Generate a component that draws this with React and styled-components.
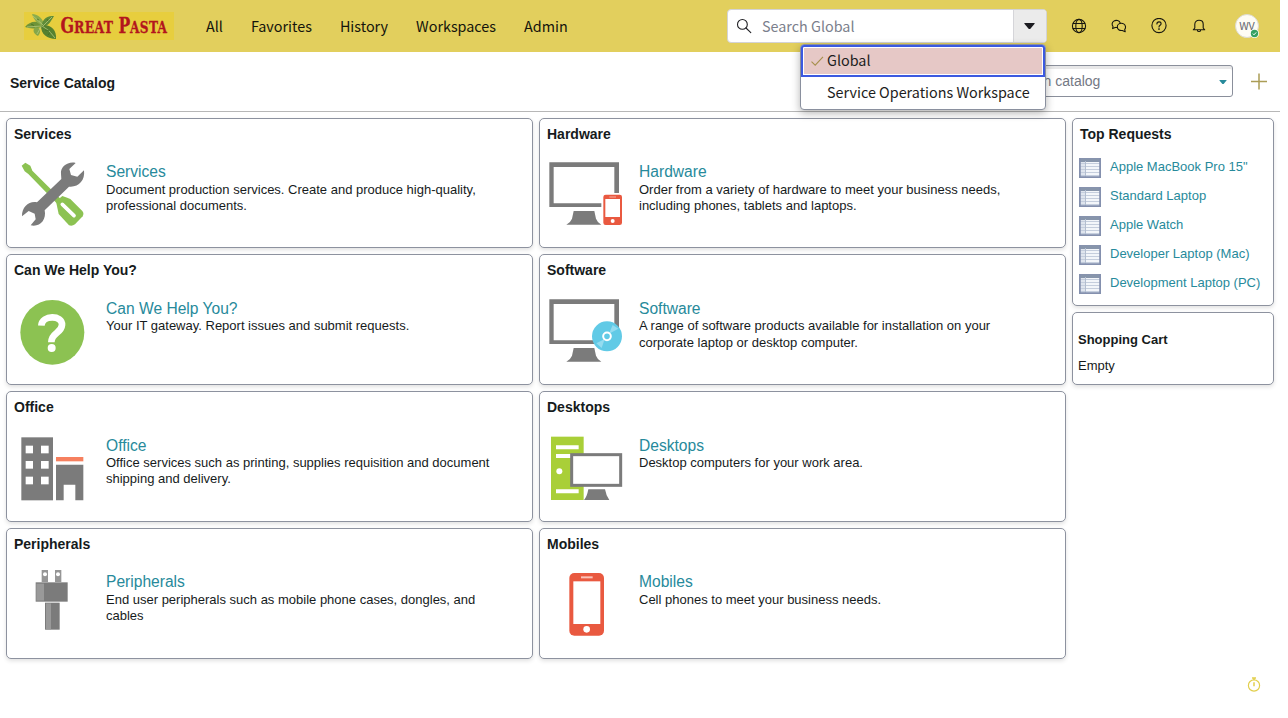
import React from "react";
import styled, { createGlobalStyle } from "styled-components";

const GlobalStyle = createGlobalStyle`
  *, *::before, *::after { box-sizing: border-box; }
  body { margin: 0; background: #fff; color: #161b1c; font-family: "Liberation Sans", Arial, sans-serif; }
  h1, h2, p, ul { margin: 0; padding: 0; }
  svg { display: block; flex: none; }
`;

const uiFont = `"Noto Sans CJK SC", "Noto Sans", sans-serif`;

const Page = styled.div`
  width: 1280px;
  height: 718px;
  display: flex;
  flex-direction: column;
`;

const Header = styled.header`
  height: 52px;
  flex: none;
  display: flex;
  align-items: center;
  padding-left: 24px;
  background: #e2cf5d;
  font-family: ${uiFont};
`;

const Nav = styled.nav`
  display: flex;
  gap: 28px;
  margin-left: 32px;
  width: 521px;
`;

const NavLink = styled.a`
  font-size: 14.36px;
  line-height: 24px;
  color: #14140c;
`;

const SearchWrap = styled.div`
  position: relative;
  width: 320px;
  height: 34px;
`;

const SearchBox = styled.div`
  display: flex;
  height: 34px;
  border: 1px solid #d3d3d6;
  border-radius: 4px;
  background: #fff;
  overflow: hidden;
  align-items: center;
  padding-left: 8px;
`;

const SearchText = styled.span`
  flex: 1;
  margin-left: 10px;
  font-size: 14.36px;
  line-height: 24px;
  color: #7b808c;
`;

const ScopeButton = styled.span`
  width: 33px;
  height: 32px;
  display: flex;
  align-items: center;
  justify-content: center;
  padding-right: 1px;
  background: #ebebeb;
  border-left: 1px solid #d5d5d9;
`;

const ScopeMenu = styled.ul`
  position: absolute;
  z-index: 2;
  top: 35px;
  left: 73px;
  width: 246px;
  height: 66px;
  border: 1px solid #8a909e;
  border-radius: 4px;
  background: #fff;
  list-style: none;
  box-shadow: 0 3px 8px rgba(0, 0, 0, 0.3);
`;

const ScopeItem = styled.li`
  display: flex;
  align-items: center;
  height: 32px;
  padding: 0 0 4px ${(p) => (p.$selected ? "7px" : "26px")};
  font-size: 14.36px;
  color: #1d1d20;
  ${(p) =>
    p.$selected &&
    `
    border: 2px solid #3c59e0;
    border-radius: 3px 3px 0 0;
    background: #e6c8c6;
    box-shadow: inset 0 0 0 1px #fff;
    gap: 2px;

    svg { margin-top: 4px; }
  `}
`;

const Tools = styled.div`
  display: flex;
  margin-left: 12px;
`;

const Tool = styled.span`
  width: 40px;
  height: 24px;
  display: flex;
  align-items: center;
  justify-content: center;
`;

const Avatar = styled.span`
  position: relative;
  width: 24px;
  height: 24px;
  margin-left: 16px;
  border: 1px solid #dcdad0;
  border-radius: 50%;
  background: #fefcf4;
  display: flex;
  align-items: center;
  justify-content: center;
  font-size: 10.8px;
  line-height: 20px;
  padding-bottom: 2px;
  color: #666971;
`;

const Presence = styled.span`
  position: absolute;
  right: -1px;
  bottom: -1px;
`;

const TitleBar = styled.div`
  height: 60px;
  flex: none;
  display: flex;
  align-items: center;
  padding: 0 12px 0 10px;
  border-bottom: 1px solid #b7b7b7;
`;

const PageTitle = styled.h1`
  flex: 1;
  padding-top: 3px;
  font-size: 14px;
  line-height: 18px;
`;

const CatalogSearch = styled.div`
  width: 234px;
  height: 32px;
  display: flex;
  align-items: center;
  justify-content: space-between;
  padding: 0 5px 0 7px;
  border: 1px solid #8a8f9b;
  border-radius: 3px;
  box-shadow: inset 0 3px 0 #e8e8e9;
  font-size: 14px;
  color: #747884;
  margin: 0 18px 1px 0;

  svg { margin-top: 2px; }
`;

const Columns = styled.main`
  display: flex;
  gap: 6px;
  padding: 5.6px 6px 0;
`;

const CategoryGrid = styled.div`
  display: grid;
  grid-template-columns: 527px 527px;
  grid-auto-rows: 130.8px;
  gap: 6px;
`;

const Card = styled.section`
  border: 1px solid #8d929f;
  border-radius: 5px;
  background: #fff;
  box-shadow: 0 2px 4px rgba(0, 0, 0, 0.12);
  height: ${(p) => p.$height || "auto"};
`;

const CardTitle = styled.h2`
  padding: 7px 7px 0;
  font-size: 14px;
  line-height: 17px;
`;

const CategoryBody = styled.div`
  display: flex;
  gap: 10px;
  padding: 13px 9px 0;
`;

const CategoryText = styled.div`
  width: 400px;
  padding-top: 7.4px;
`;

const CategoryLink = styled.a`
  display: block;
  font-size: 15.6px;
  line-height: 18px;
  color: #278a9b;
`;

const Description = styled.p`
  padding-top: 0.6px;
  font-size: 13px;
  line-height: 16.3px;
`;

const SideColumn = styled.aside`
  width: 202px;
  display: flex;
  flex-direction: column;
  gap: 6px;
`;

const RequestList = styled.div`
  padding: 11px 6px 0;
`;

const RequestRow = styled.a`
  display: flex;
  align-items: center;
  gap: 9px;
  height: 29px;
  font-size: 13px;
  color: #278a9b;
  white-space: nowrap;

  span { padding-bottom: 3px; }
`;

const CartBody = styled.div`
  padding: 19px 5px 0;
  font-size: 13px;
  line-height: 16px;

  h2 { font-size: 13px; line-height: 16px; margin-bottom: 10px; }
`;

const Footer = styled.footer`
  display: flex;
  justify-content: flex-end;
  padding: 18px 19px 0 0;
`;

const Logo = () => (
  <svg width="150" height="28" viewBox="0 0 150 28">
    <rect width="150" height="28" fill="#e7ce3e" />
    <path d="M1 15C5 10 12 8 18 12L20 14C14 17 6 17 1 15Z" fill="#6f9438" />
    <path d="M8 2C14 2 20 7 20 14C14 13 10 8 8 2Z" fill="#8aac4c" />
    <path d="M30 4C22 3 17 9 18 15C24 15 27 9 30 4Z" fill="#5f8c38" />
    <path d="M17 14C25 11 33 17 32 27C23 27 17 22 17 14Z" fill="#55812f" />
    <path d="M11 15C16 15 18 19 14 24C10 22 8 19 11 15Z" fill="#85a748" />
    <path d="M3 15L18 14M9 4L19 13M28 5L19 14M18 14Q25 17 31 26M13 22L17 15" stroke="#b4c87c" strokeWidth=".8" fill="none" />
    <path d="M7 12L10 13.5M23 7L24 9M21 18L25 18.5M24 23L26 20.5M13 7L15 8" stroke="#3f6a24" strokeWidth=".7" fill="none" />
    <g fill="#b3151d" stroke="#b3151d" strokeWidth=".3" fontFamily="'DejaVu Serif Condensed', 'DejaVu Serif', serif" fontWeight="700">
      <text transform="translate(36.4 21.4) scale(.79 1)" fontSize="22.5">
        G<tspan fontSize="17.5" letterSpacing=".4">REAT</tspan>
      </text>
      <text transform="translate(94.4 21.4) scale(.77 1)" fontSize="22.5">
        P<tspan fontSize="17.5" letterSpacing=".4">ASTA</tspan>
      </text>
    </g>
  </svg>
);

const line = { fill: "none", stroke: "#17170f", strokeWidth: 1.1, strokeLinecap: "round", strokeLinejoin: "round" };

const GlobeIcon = () => (
  <svg width="16" height="16" viewBox="0 0 16 16" {...line}>
    <circle cx="8" cy="8" r="6.6" />
    <ellipse cx="8" cy="8" rx="3.2" ry="6.6" />
    <path d="M2.2 5.5H13.8M2.2 10.5H13.8" />
  </svg>
);

const ChatIcon = () => (
  <svg width="16" height="16" viewBox="0 0 16 16" {...line}>
    <path d="M6.1 9.4C5.5 9.6 4.8 9.6 4.2 9.4L1.6 10.6L2 8.4C.6 7 .9 4.3 2.8 3.1C5.1 1.6 8.5 2.4 9.2 4.9" />
    <path d="M10.4 5.3C8 5.3 6.3 7 6.3 9C6.3 11.1 8.5 12.9 11.3 12.5L14.2 13.7L13.7 11.5C15.2 9.9 14.7 7.1 12.7 5.9C12 5.5 11.2 5.3 10.4 5.3Z" />
  </svg>
);

const HelpIcon = () => (
  <svg width="17" height="16" viewBox="0 0 17 16" {...line}>
    <circle cx="8" cy="7.5" r="7.1" />
    <path d="M5.9 6C5.9 4.7 6.8 3.9 8 3.9C9.2 3.9 10.1 4.7 10.1 5.8C10.1 7.3 8 7.3 8 8.9" />
    <circle cx="8" cy="11" r=".5" fill="#17170f" stroke="none" />
    <circle cx="8" cy="11" r=".3" />
  </svg>
);

const BellIcon = () => (
  <svg width="16" height="16" viewBox="0 0 16 16" {...line}>
    <path d="M2.3 11.8L3.8 10V6.2C3.8 3.9 5.6 2.3 8 2.3C10.4 2.3 12.2 3.9 12.2 6.2V10L13.7 11.8ZM6.4 12.2C6.6 14 9.4 14 9.6 12.2" />
  </svg>
);

const SearchIcon = () => (
  <svg width="16" height="16" viewBox="0 0 16 16" {...line} stroke="#202024">
    <circle cx="6.4" cy="6.4" r="4.9" />
    <path d="M10 10L14.8 14.6" />
  </svg>
);

const Caret = ({ width, height, color }) => (
  <svg width={width} height={height} viewBox="0 0 10 6">
    <path d="M.5 0H9.5Q10 .2 9.7 .8L5.5 5.7Q5 6.2 4.5 5.7L.3 .8Q0 .2 .5 0Z" fill={color} />
  </svg>
);

const CheckIcon = () => (
  <svg width="15" height="12" viewBox="0 0 15 12">
    <path d="M1.5 6.6L5.2 10.2L13 1.8" fill="none" stroke="#a6904d" strokeWidth="1.1" />
  </svg>
);

const PlusIcon = () => (
  <svg width="17" height="17" viewBox="0 0 17 17">
    <path d="M8 .5V16.5M0 8.5H16" stroke="#ab9d56" strokeWidth="1.5" />
  </svg>
);

const TimerIcon = () => (
  <svg width="14" height="15" viewBox="0 0 14 15" fill="none" stroke="#e2cf4d" strokeWidth="1.2">
    <circle cx="7" cy="8.5" r="5.6" />
    <path d="M5 .9H9M7 1V3M7 5.2V9.3" strokeWidth="1.5" />
  </svg>
);

const ListIcon = () => (
  <svg width="22" height="20" viewBox="0 0 22 20">
    <rect x=".5" y=".5" width="21" height="19" fill="#f3f6fa" stroke="#8793ae" />
    <rect x="1" y="1" width="20" height="3" fill="#8795ab" />
    <rect x="1" y="4" width="6" height="15" fill="#dfe5ee" />
    <path d="M1 5.5H21M1 8.5H21M1 11.5H21M1 14.5H21" stroke="#c5cedd" />
    <path d="M6.5 3V19" stroke="#b3bed0" />
    <path d="M1 17.8H21" stroke="#b3bfd2" />
    <path d="M0 19H22M21 0V20M1 0V20" stroke="#8490ae" strokeWidth="1.6" />
  </svg>
);

// Category drawings share a 240 x 228 unit frame shown at one third size.
const Picture = ({ x, y, children }) => (
  <svg width="80" height="76" viewBox={`${x} ${y} 240 228`}>{children}</svg>
);

const ServicesPicture = () => (
  <Picture x={48} y={138}>
    <path d="M65 167L76 158L91 167L97 182L195 280L181 291L85 192L74 184Z" fill="#8cc252" />
    <path d="M168 274L187 258Q200 262 211 267L247 303Q253 310 248 319L225 343Q216 350 207 346L176 312Z" fill="#8cc252" />
    <path d="M187 283L222 317" stroke="#fff" strokeWidth="11" strokeLinecap="round" />
    <path d="M227 159C205 153 180 170 183 192L184 207L111 277C88 272 65 290 66 319L86 303L104 311L107 328L92 346C120 352 140 330 134 301L207 230C235 233 256 212 252 181L232 200L213 195L208 177Z" fill="#7b7b7b" />
  </Picture>
);

const QuestionPicture = () => (
  <Picture x={48} y={546}>
    <ellipse cx="157" cy="667" rx="96" ry="97" fill="#8cc252" />
    <path d="M124 647C126 614 188 614 186 645C184 671 154 667 154 697" fill="none" stroke="#fff" strokeWidth="20" />
    <circle cx="155" cy="714" r="12" fill="#fff" />
  </Picture>
);

const Monitor = () => (
  <>
    <path d="M58 157H267V291H58ZM71 171V280H253V171Z" fill="#7b7b7b" fillRule="evenodd" />
    <path d="M131 303H193L198 326Q203 339 214 344H109Q122 337 126 326Z" fill="#7b7b7b" />
  </>
);

const HardwarePicture = () => (
  <Picture x={57} y={138}>
    <Monitor />
    <rect x="214" y="249" width="63" height="100" fill="#fff" />
    <rect x="220" y="254" width="56" height="91" rx="7" fill="#e95940" />
    <rect x="226" y="267" width="44" height="54" fill="#fff" />
    <path d="M238 261H258" stroke="#f7b0a4" strokeWidth="3" />
    <circle cx="248" cy="333" r="6" fill="#fff" />
  </Picture>
);

const SoftwarePicture = () => (
  <Picture x={57} y={546}>
    <g transform="translate(0 411)"><Monitor /></g>
    <circle cx="231" cy="679" r="45" fill="#61cae6" />
    <path d="M237 671L248 645L265 656ZM224 687L199 700L215 714Z" fill="#94dcf0" />
    <circle cx="231" cy="679" r="11.5" fill="#61cae6" stroke="#fff" strokeWidth="6" />
  </Picture>
);

const OfficePicture = () => (
  <Picture x={48} y={147}>
    <rect x="64" y="172" width="95" height="189" fill="#7b7b7b" />
    {[197, 243, 290].map((top) => (
      <g key={top} fill="#fff">
        <rect x="77" y={top} width="22" height="23" />
        <rect x="123" y={top} width="23" height="23" />
      </g>
    ))}
    <rect x="168" y="231" width="82" height="13" fill="#f6805f" />
    <path d="M168 254H250V361H226V314H191V361H168Z" fill="#7b7b7b" />
  </Picture>
);

const DesktopsPicture = () => (
  <Picture x={57} y={147}>
    <rect x="63" y="170" width="98" height="190" fill="#a9cf38" />
    <path d="M78 202H146M78 228H125M78 334H146" stroke="#fff" strokeWidth="12" />
    <circle cx="88" cy="274" r="9" fill="#fff" />
    <rect x="125" y="224" width="147" height="92" fill="#fff" stroke="#7b7b7b" strokeWidth="9" />
    <path d="M175 328H225L230 346L238 360H162Q171 350 175 328Z" fill="#7b7b7b" />
  </Picture>
);

const PeripheralsPicture = () => (
  <Picture x={48} y={558}>
    <path d="M125 570H144V606H125ZM165 570H184V606H165Z" fill="#969696" />
    <circle cx="135" cy="583" r="6" fill="#fff" />
    <circle cx="174" cy="583" r="6" fill="#fff" />
    <rect x="107" y="607" width="96" height="58" fill="#7b7b7b" />
    <rect x="109" y="611" width="23" height="51" fill="#999" />
    <rect x="135" y="668" width="44" height="81" fill="#7b7b7b" />
    <rect x="138" y="670" width="15" height="78" fill="#999" />
  </Picture>
);

const MobilesPicture = () => (
  <Picture x={57} y={558}>
    <rect x="118" y="579" width="104" height="188" rx="15" fill="#e95940" />
    <rect x="130" y="604" width="81" height="128" fill="#fff" />
    <path d="M153 592H188" stroke="#fbc2b8" strokeWidth="6" />
    <circle cx="170" cy="748" r="10" fill="#fff" />
  </Picture>
);

const categories = [
  ["Services", "Document production services. Create and produce high-quality, professional documents.", ServicesPicture],
  ["Hardware", "Order from a variety of hardware to meet your business needs, including phones, tablets and laptops.", HardwarePicture],
  ["Can We Help You?", "Your IT gateway. Report issues and submit requests.", QuestionPicture],
  ["Software", "A range of software products available for installation on your corporate laptop or desktop computer.", SoftwarePicture],
  ["Office", "Office services such as printing, supplies requisition and document shipping and delivery.", OfficePicture],
  ["Desktops", "Desktop computers for your work area.", DesktopsPicture],
  ["Peripherals", "End user peripherals such as mobile phone cases, dongles, and cables", PeripheralsPicture],
  ["Mobiles", "Cell phones to meet your business needs.", MobilesPicture],
];

const requests = ['Apple MacBook Pro 15"', "Standard Laptop", "Apple Watch", "Developer Laptop (Mac)", "Development Laptop (PC)"];

export default function App() {
  return (
    <Page>
      <GlobalStyle />
      <Header>
        <Logo />
        <Nav>
          {["All", "Favorites", "History", "Workspaces", "Admin"].map((label) => (
            <NavLink key={label}>{label}</NavLink>
          ))}
        </Nav>
        <SearchWrap>
          <SearchBox>
            <SearchIcon />
            <SearchText>Search Global</SearchText>
            <ScopeButton><Caret width={11} height={6.5} color="#1b1b20" /></ScopeButton>
          </SearchBox>
          <ScopeMenu>
            <ScopeItem $selected><CheckIcon />Global</ScopeItem>
            <ScopeItem>Service Operations Workspace</ScopeItem>
          </ScopeMenu>
        </SearchWrap>
        <Tools>
          <Tool><GlobeIcon /></Tool>
          <Tool><ChatIcon /></Tool>
          <Tool><HelpIcon /></Tool>
          <Tool><BellIcon /></Tool>
        </Tools>
        <Avatar>
          WV
          <Presence>
            <svg width="9" height="9" viewBox="0 0 9 9">
              <circle cx="4.5" cy="4.5" r="4.5" fill="#fff" />
              <circle cx="4.5" cy="4.5" r="3.7" fill="#35a163" />
              <path d="M2.8 4.6L4 5.8L6.2 3.4" fill="none" stroke="#fff" />
            </svg>
          </Presence>
        </Avatar>
      </Header>
      <TitleBar>
        <PageTitle>Service Catalog</PageTitle>
        <CatalogSearch>
          <span>Search catalog</span>
          <Caret width={8} height={4.5} color="#278a9b" />
        </CatalogSearch>
        <PlusIcon />
      </TitleBar>
      <Columns>
        <CategoryGrid>
          {categories.map(([name, text, Drawing]) => (
            <Card key={name}>
              <CardTitle>{name}</CardTitle>
              <CategoryBody>
                <Drawing />
                <CategoryText>
                  <CategoryLink>{name}</CategoryLink>
                  <Description>{text}</Description>
                </CategoryText>
              </CategoryBody>
            </Card>
          ))}
        </CategoryGrid>
        <SideColumn>
          <Card $height="188px">
            <CardTitle>Top Requests</CardTitle>
            <RequestList>
              {requests.map((name) => (
                <RequestRow key={name}><ListIcon /><span>{name}</span></RequestRow>
              ))}
            </RequestList>
          </Card>
          <Card $height="73.4px">
            <CartBody>
              <h2>Shopping Cart</h2>
              <p>Empty</p>
            </CartBody>
          </Card>
        </SideColumn>
      </Columns>
      <Footer><TimerIcon /></Footer>
    </Page>
  );
}
